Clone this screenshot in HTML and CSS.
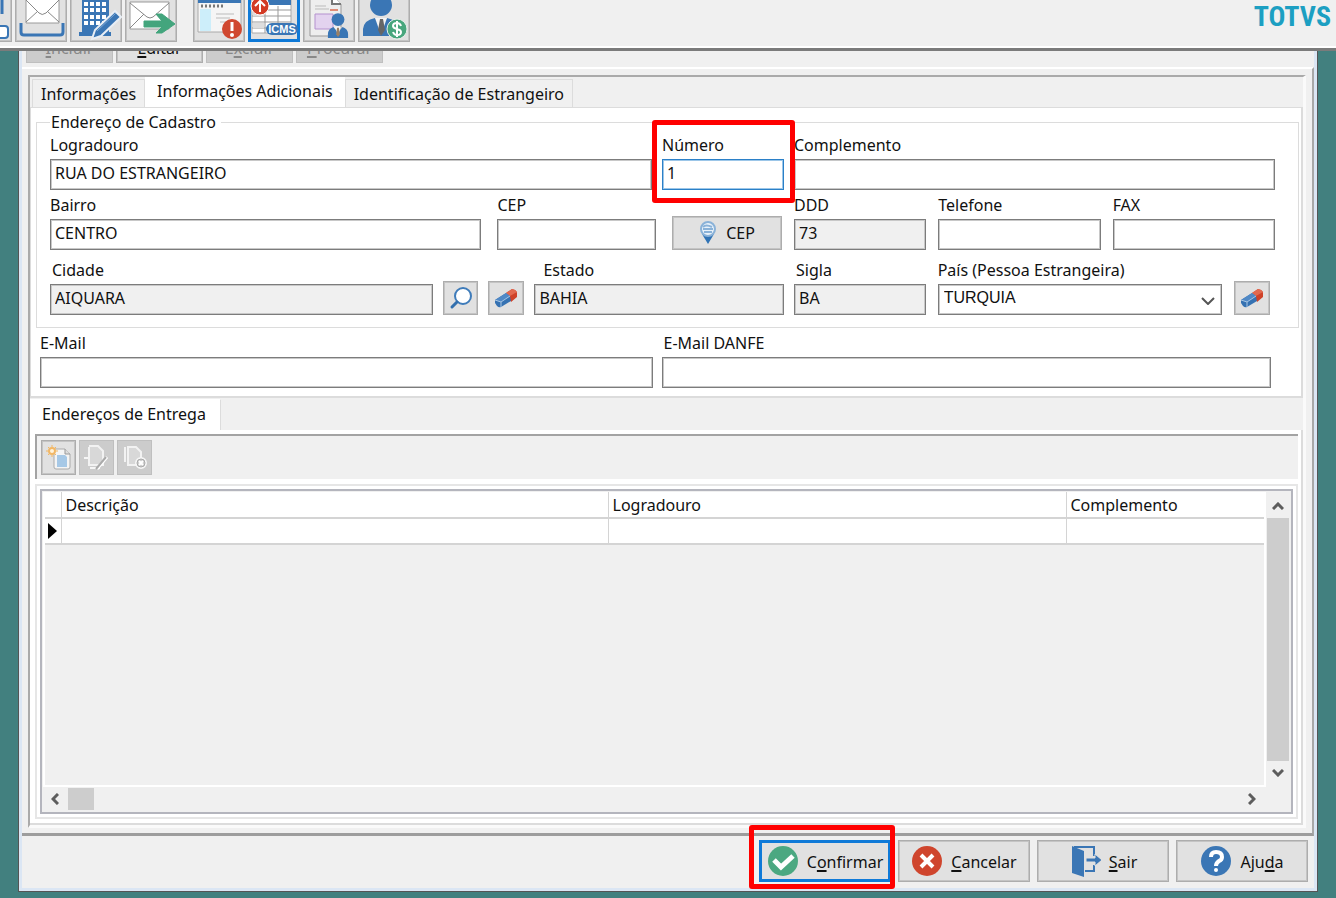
FILE: index.html
```html
<!DOCTYPE html>
<html lang="pt-BR">
<head>
<meta charset="utf-8">
<meta name="viewport" content="width=device-width, initial-scale=1">
<title>TOTVS - Cadastro</title>
<link rel="stylesheet" href="styles.css">
</head>
<body>
<svg class="defs" aria-hidden="true">
  <symbol id="eraser" viewBox="0 0 24 24">
    <path d="M1 14L12 7l5 3v5L7 21q-2 1-4-1l-2-3z" fill="#3672b2"/>
    <path d="M12 7l6-4q5 1 5 4v4l-6 5-1-6z" fill="#cf4229"/>
    <path d="M12 7l6-4q3 0 5 3l-7 4z" fill="#e2694f"/>
    <path d="M1 14l11-7 4 3-9 6z" fill="#5089c6"/>
    <path d="M1 14l6 2 9-6M7 16v5" fill="none" stroke="#a8c6e4"/>
  </symbol>
  <symbol id="person" viewBox="0 0 24 28">
    <circle cx="12" cy="7" r="7" fill="#3a76b5"/>
    <path d="M1 27v-4q0-6 6-8l5 6 5-6q6 2 6 8v4z" fill="#3a76b5"/>
    <path d="M9 15h6l-3 10z" fill="#f4f4f4"/>
    <path d="M11 16h2l1 7-2 3-2-3z" fill="#9a8065"/>
  </symbol>
</svg>

<header class="topbar">
  <nav class="tools" aria-label="Ferramentas">
    <button class="tool tool-first" aria-label="Módulos"><svg viewBox="0 0 52 52"><path d="M36 6h6v18" fill="none" stroke="#3a76b5" stroke-width="3"/><rect x="34" y="36" width="14" height="12" rx="3" fill="#fff" stroke="#3a76b5" stroke-width="2"/></svg></button>
    <button class="tool" aria-label="Caixa de entrada"><svg viewBox="0 0 52 52"><path d="M11 6h33v27H11z" fill="#fff" stroke="#9a9a9a"/><path d="M11 10l13 13q3 3 7 0L44 10M11 32l12-11M44 32L32 21" fill="none" stroke="#888"/><path d="M6 33v9q0 3 3 3h36q3 0 3-3v-9" fill="none" stroke="#3a76b5" stroke-width="3"/></svg></button>
    <button class="tool" aria-label="Editar empresa"><svg viewBox="0 0 52 52"><path d="M12 0h27v42h2v4H9v-4h3z" fill="#3a76b5"/><path d="M14 14h24M14 20h24M14 27h24M14 33h24" stroke="#fff" stroke-width="4" stroke-dasharray="4 2"/><path d="M22 49l3-9 20-19 6 6-20 19z" fill="#3a76b5" stroke="#e8eef5" stroke-width="2"/><path d="M27 41l19-18" stroke="#79a6d4"/></svg></button>
    <button class="tool tool-last" aria-label="Enviar"><svg viewBox="0 0 52 52"><path d="M5 12h39v27H5z" fill="#fff" stroke="#999"/><path d="M5 13l17 14q3 2 6 0l16-14M5 38l14-14M44 38L31 24" fill="none" stroke="#888"/><path d="M19 31h18l-6-7h6l13 10-13 9h-6l6-6H19z" fill="#43a57d" stroke="#43a57d"/></svg></button>
    <button class="tool" aria-label="Avisos"><svg viewBox="0 0 52 52"><path d="M5 4h43v38H5z" fill="#f5f5f5" stroke="#aaa"/><path d="M5 4h43v9H5z" fill="#3a76b5"/><path d="M8 16h24" stroke="#777" stroke-width="3" stroke-dasharray="2 2"/><path d="M7 19h11v22H7z" fill="#cdeefa"/><path d="M23 24h18M23 28h14M27 32h12" stroke="#bbb"/><circle cx="39" cy="39" r="10" fill="#d04830"/><path d="M39 32v9" stroke="#fff" stroke-width="3"/><circle cx="39" cy="45" r="2" fill="#fff"/></svg></button>
    <button class="tool tool-selected" aria-label="ICMS"><svg viewBox="0 0 52 52"><path d="M4 5h39v38H4z" fill="#fff" stroke="#aaa"/><path d="M20 5h23v10H20z" fill="#3a76b5"/><path d="M4 20h39M4 26h39M4 32h39M4 38h39M17 16v27M30 16v27" stroke="#999"/><path d="M5 21h11v5H5zM5 33h11v5H5z" fill="#ddd"/><circle cx="12" cy="16" r="9" fill="#d33b25" stroke="#fff"/><path d="M12 22V11m-5 5l5-5 5 5" fill="none" stroke="#fff" stroke-width="2"/><rect x="18" y="33" width="32" height="12" rx="6" fill="#3a76b5"/><text x="34" y="43" text-anchor="middle" class="icms">ICMS</text></svg></button>
    <button class="tool" aria-label="Documento do cliente"><svg viewBox="0 0 52 52"><path d="M7 5h22l9 9v32H7z" fill="#eee" stroke="#999"/><path d="M29 5v9h9" fill="#fff" stroke="#777" stroke-width="2"/><path d="M12 16h11M12 19h14" stroke="#bbb"/><path d="M27 20h8" stroke="#e08b76" stroke-width="2"/><path d="M12 24h18v15H12z" fill="#e3d3ef" stroke="#b592cf"/><use href="#person" x="24" y="23" width="22" height="26"/></svg></button>
    <button class="tool" aria-label="Financeiro do cliente"><svg viewBox="0 0 52 52"><circle cx="23" cy="15" r="11" fill="#3a76b5"/><path d="M5 46v-7q1-9 12-11l6 6 6-6q11 2 11 11v7z" fill="#3a76b5"/><path d="M17 28h12l-6 17z" fill="#f4f4f4"/><path d="M22 29h3l2 11-4 6-3-6z" fill="#666"/><circle cx="39" cy="39" r="10" fill="#48a67d" stroke="#e6efe9"/><path d="M43 36q-1-3-4-3-4 0-4 3 0 2 4 3t4 3q0 3-4 3-3 0-4-3M39 31v16" fill="none" stroke="#fff" stroke-width="2"/></svg></button>
  </nav>
  <div class="brand">TOTVS</div>
</header>

<main class="window">
  <div class="commands">
    <button class="command" disabled><u>I</u>ncluir</button>
    <button class="command"><u>E</u>ditar</button>
    <button class="command" disabled>E<u>x</u>cluir</button>
    <button class="command" disabled><u>P</u>rocurar</button>
  </div>

  <div class="frame">
    <div class="notebook">
      <div class="tabs" role="tablist">
        <button class="tab" role="tab">Informações</button>
        <button class="tab tab-active" role="tab" aria-selected="true">Informações Adicionais</button>
        <button class="tab" role="tab">Identificação de Estrangeiro</button>
      </div>

      <form class="page" id="form">
        <fieldset class="group">
          <legend>Endereço de Cadastro</legend>
          <div class="row row-street">
            <div class="field"><label for="logradouro">Logradouro</label><input id="logradouro" value="RUA DO ESTRANGEIRO"></div>
            <div class="field marked marked-number"><label for="numero">Número</label><input id="numero" class="is-focused" value="1"></div>
            <div class="field"><label for="complemento">Complemento</label><input id="complemento"></div>
          </div>
          <div class="row row-halves">
            <div class="row row-district">
              <div class="field"><label for="bairro">Bairro</label><input id="bairro" value="CENTRO"></div>
              <div class="field"><label for="cep">CEP</label><input id="cep"></div>
              <button type="button" class="action"><svg class="pin" viewBox="0 0 18 24"><path d="M3 13h12L9 23z" fill="#2f73b5"/><circle cx="9" cy="8" r="7" fill="#e9f2fa" stroke="#8ab2d8" stroke-width="2"/><path d="M4 6q3-3 9 0M4 8h10M5 11h8" fill="none" stroke="#8ab2d8" stroke-width="2"/></svg>CEP</button>
            </div>
            <div class="row row-phones">
              <div class="field"><label for="ddd">DDD</label><input id="ddd" value="73" readonly></div>
              <div class="field"><label for="telefone">Telefone</label><input id="telefone"></div>
              <div class="field"><label for="fax">FAX</label><input id="fax"></div>
            </div>
          </div>
          <div class="row row-halves row-spaced">
            <div class="row row-city">
              <div class="field field-city"><label for="cidade">Cidade</label><input id="cidade" value="AIQUARA" readonly></div>
              <button type="button" class="action" aria-label="Pesquisar cidade"><svg class="glyph" viewBox="0 0 24 24"><circle cx="14" cy="10" r="8" fill="#fff" stroke="#3f7cba" stroke-width="2"/><path d="M8 16l-5 5" stroke="#3370ae" stroke-width="3" stroke-linecap="round"/></svg></button>
              <button type="button" class="action" aria-label="Limpar cidade"><svg class="glyph"><use href="#eraser"/></svg></button>
              <div class="field field-state"><label for="estado">Estado</label><input id="estado" value="BAHIA" readonly></div>
            </div>
            <div class="row row-country">
              <div class="field field-city"><label for="sigla">Sigla</label><input id="sigla" value="BA" readonly></div>
              <div class="field"><label for="pais">País (Pessoa Estrangeira)</label>
                <div class="combo"><select id="pais"><option>TURQUIA</option></select><svg class="chevron" viewBox="0 0 14 8"><path d="M1 1l6 6 6-6" fill="none" stroke="#555" stroke-width="2"/></svg></div>
              </div>
              <button type="button" class="action" aria-label="Limpar país"><svg class="glyph"><use href="#eraser"/></svg></button>
            </div>
          </div>
        </fieldset>
        <div class="row row-mail">
          <div class="field"><label for="email">E-Mail</label><input id="email" type="email"></div>
          <div class="field field-city"><label for="danfe">E-Mail DANFE</label><input id="danfe" type="email"></div>
        </div>
      </form>

      <div class="tabs tabs-delivery" role="tablist">
        <button class="tab tab-active" role="tab" aria-selected="true">Endereços de Entrega</button>
      </div>

      <section class="delivery">
        <div class="minibar">
          <button class="mini" aria-label="Novo endereço"><svg viewBox="0 0 28 28"><path d="M9 5h11l5 5v13q0 2-2 2H11q-2 0-2-2z" fill="#f4f4f4" stroke="#aaa"/><path d="M20 5v5h5" fill="#ddd" stroke="#999"/><path d="M12 11h8l2 2v10H12z" fill="#a6c8e6"/><circle cx="7" cy="7" r="3" fill="#fff3dc" stroke="#f2b765" stroke-width="2"/><path d="M7 1v2M7 11v2M1 7h2M11 7h2M3 3l1 1M10 10l1 1M11 3l-1 1M3 11l1-1" stroke="#f2b765"/></svg></button>
          <button class="mini" disabled aria-label="Editar endereço"><svg viewBox="0 0 28 28"><path d="M6 2h9l5 5v14H6V3" fill="#d8d8d8" stroke="#f2f2f2" stroke-width="2"/><path d="M1 14h4M7 24h10" stroke="#f5f5f5" stroke-width="2"/><path d="M14 25l10-12" stroke="#fff" stroke-width="3"/><path d="M13 25l10-12" stroke="#aaa" stroke-width="2"/></svg></button>
          <button class="mini" disabled aria-label="Excluir endereço"><svg viewBox="0 0 28 28"><path d="M4 3v15M7 3h8l5 5v13H7z" fill="#d8d8d8" stroke="#f2f2f2" stroke-width="2"/><circle cx="20" cy="19" r="5" fill="#ccc" stroke="#f5f5f5" stroke-width="2"/><path d="M18 17l4 4m0-4l-4 4" stroke="#fff" stroke-width="2"/><circle cx="20" cy="19" r="4" fill="none" stroke="#aaa"/></svg></button>
        </div>
        <div class="grid-frame">
          <div class="grid">
            <div class="grid-view">
              <table class="records">
                <colgroup><col class="col-mark"><col class="col-desc"><col class="col-street"><col class="col-extra"></colgroup>
                <thead><tr><td></td><th>Descrição</th><th>Logradouro</th><th>Complemento</th></tr></thead>
                <tbody><tr><td><span class="row-mark"></span></td><td></td><td></td><td></td></tr></tbody>
              </table>
            </div>
            <div class="scroll scroll-v">
              <svg viewBox="0 0 12 8"><path d="M1 7l5-5 5 5" fill="none" stroke="#5d5d5d" stroke-width="3"/></svg>
              <div class="thumb"></div>
              <svg viewBox="0 0 12 8"><path d="M1 1l5 5 5-5" fill="none" stroke="#5d5d5d" stroke-width="3"/></svg>
            </div>
            <div class="scroll scroll-h">
              <svg viewBox="0 0 8 12"><path d="M7 1L2 6l5 5" fill="none" stroke="#5d5d5d" stroke-width="3"/></svg>
              <div class="thumb"></div>
              <svg viewBox="0 0 8 12"><path d="M1 1l5 5-5 5" fill="none" stroke="#5d5d5d" stroke-width="3"/></svg>
            </div>
          </div>
        </div>
      </section>
    </div>
  </div>

  <footer class="actions">
    <div class="marked marked-confirm"><button class="dialog-button is-default" form="form" type="button"><svg viewBox="0 0 32 32"><circle cx="16" cy="16" r="15" fill="#4ba881"/><path d="M7 15l7 7L26 11" fill="none" stroke="#fff" stroke-width="5"/></svg><span>C<u>o</u>nfirmar</span></button></div>
    <button class="dialog-button"><svg viewBox="0 0 32 32"><circle cx="16" cy="16" r="15" fill="#cf452d"/><path d="M10 10l12 12m0-12L10 22" stroke="#fff" stroke-width="4"/></svg><span><u>C</u>ancelar</span></button>
    <button class="dialog-button"><svg viewBox="0 0 32 32"><path d="M3 1l12 5v26L3 28z" fill="#3a76b5"/><path d="M5 2h20v9M25 20v6h-9" fill="none" stroke="#3a76b5" stroke-width="2"/><path d="M17 13h9V9l7 6-7 6v-4h-9z" fill="#3a76b5" stroke="#e1e1e1"/></svg><span><u>S</u>air</span></button>
    <button class="dialog-button"><svg viewBox="0 0 32 32"><circle cx="16" cy="16" r="15" fill="#3a76b5"/><path d="M11 12q0-5 5-5 6 0 6 5 0 3-3 4-3 2-3 5" fill="none" stroke="#fff" stroke-width="4"/><circle cx="16" cy="25" r="2" fill="#fff"/></svg><span>Aju<u>d</u>a</span></button>
  </footer>
</main>
</body>
</html>
```

FILE: styles.css
```css
* { box-sizing: border-box; }

body {
  margin: 0;
  min-height: 100vh;
  display: flex;
  flex-direction: column;
  background: #42807f;
  color: #111;
  font: 16px/22px "Noto Sans", sans-serif;
}

button, input, select { font: inherit; color: inherit; }
button {
  padding: 0;
  border: 1px solid #adadad;
  border-radius: 0;
  background: #e1e1e1;
  box-shadow: inset 0 0 0 1px #c4c4c4;
}
button:disabled { background: #ccc; border-color: #bfbfbf; color: #888; box-shadow: none; }
u { text-underline-offset: 2px; text-decoration-thickness: 2px; }
.defs { display: none; }

/* Top bar */
.topbar {
  display: flex;
  justify-content: space-between;
  height: 51px;
  overflow: hidden;
  background: #f0f0f0;
  border-bottom: 3px solid #7b7b7b;
  box-shadow: inset 0 -2px #fff;
}
.tools { display: flex; align-items: flex-end; gap: 3px; padding-bottom: 6px; }
.tool { width: 52px; height: 52px; flex: none; }
.tool svg { display: block; width: 52px; height: 52px; margin: -1px; }
.tool-first { margin-left: -40px; }
.tool-last { margin-right: 13px; }
.tool-selected { border: 3px solid #0f7ad8; box-shadow: none; }
.tool-selected svg { margin: -3px; }
.icms { font: bold 11px "Liberation Sans", sans-serif; fill: #fff; }
.brand {
  padding-right: 5px;
  color: #1c9fc2;
  font: bold 28px/34px "Liberation Sans Narrow", "Roboto Condensed", "Open Sans Condensed", sans-serif;
}

/* Window */
.window {
  flex: 1;
  display: flex;
  flex-direction: column;
  margin: 0 18px 6px;
  background: #f0f0f0;
  border: 1px solid #555;
  border-top: 0;
  box-shadow: inset 3px 0 #dbe6f4, inset -3px 0 #dbe6f4, inset 0 -3px #dbe6f4;
  padding: 0 3px 3px;
}
.commands { display: flex; align-items: flex-end; gap: 3px; height: 12px; padding-left: 4px; overflow: hidden; }
.command { flex: none; width: 87px; height: 32px; padding-top: 2px; }

.frame {
  flex: 1;
  display: flex;
  margin-top: 4px;
  padding: 6px 6px 5px 6px;
  border-top: 2px solid #fff;
  border-right: 2px solid #a8a8a8;
  border-bottom: 3px solid #9d9d9d;
}
.notebook {
  flex: 1;
  min-width: 0;
  display: flex;
  flex-direction: column;
  border: 2px solid #aaa;
  border-right: 3px solid #fafafa;
  border-bottom: 3px solid #fafafa;
}

.tabs { display: flex; align-items: flex-end; padding-left: 2px; }
.tab { height: 28px; padding: 0 8px; border: 1px solid #dcdcdc; border-bottom: 0; background: #f0f0f0; box-shadow: none; }
.tab-active { height: 30px; padding: 0 11px 4px; border-color: #fff; background: #fff; }
.tabs-delivery { padding: 1px 0 0; border-bottom: 0; }
.tabs-delivery .tab-active { height: 31px; padding-bottom: 2px; padding-right: 14px; border-right-color: #dcdcdc; }

/* Address form */
.page {
  margin: 0;
  padding: 3px 2px 8px 5px;
  border: 1px solid #dcdcdc;
  border-width: 1px 2px 2px 1px;
  background: #fff;
}
.group { min-width: 0; margin: 0; padding: 1px 23px 12px 13px; border: 1px solid #dcdcdc; }
legend { padding: 0 5px 0 1px; }
.row { display: grid; align-items: end; }
.group > .row + .row { margin-top: 4px; }
.group > .row-spaced.row-spaced { margin-top: 9px; }
.row-street { grid-template-columns: 602fr 122fr 481fr; gap: 10px; }
.row-halves { grid-template-columns: 734fr 481fr; gap: 10px; }
.row-district { grid-template-columns: 430fr 158fr 110px; gap: 16px; padding-right: 2px; }
.row-phones { grid-template-columns: 132fr 162fr 162fr; gap: 12px; }
.row-city { grid-template-columns: 384fr 35px 36px 250fr; gap: 10px; }
.row-country { grid-template-columns: 132fr 285fr 36px; gap: 12px; padding-right: 5px; }
.row-mail { grid-template-columns: 612fr 609fr; gap: 9px; margin: 4px 28px 0 4px; }
.field { display: flex; flex-direction: column; gap: 3px; min-width: 0; }
.field-city label { padding-left: 2px; }
.field-state label { padding-left: 9px; }
.field input, .field select {
  width: 100%;
  min-width: 0;
  height: 31px;
  margin: 0;
  padding: 0 4px 3px;
  border: 1px solid #7c7c7c;
  border-radius: 0;
  background: #fff;
  box-shadow: inset 0 0 0 1px #c8c8c8;
  outline: 0;
}
.field input[readonly] { background: #f0f0f0; }
.field .is-focused { border-color: #2b80c8; box-shadow: inset 0 0 0 1px #9cc6e8; }
.combo { position: relative; }
.field select { display: block; appearance: none; font-family: "Liberation Sans", sans-serif; padding-left: 5px; }
.chevron { position: absolute; right: 7px; top: 13px; width: 14px; height: 8px; pointer-events: none; }
.action { display: flex; align-items: center; justify-content: center; gap: 9px; height: 34px; }
.pin { width: 18px; height: 24px; }
.glyph { width: 24px; height: 24px; }

/* Red highlight boxes */
.marked { position: relative; }
.marked::after { content: ""; position: absolute; z-index: 1; border: 5px solid #f00; border-radius: 3px; pointer-events: none; }
.marked-number::after { inset: -14px -11px -13px -10px; }
.marked-confirm::after { inset: -15px -4px -7px -10px; }

/* Delivery addresses */
.delivery {
  flex: 1;
  display: flex;
  flex-direction: column;
  gap: 5px;
  padding: 4px 3px 4px 5px;
  background: #fff;
  border-right: 2px solid #dcdcdc;
  border-bottom: 2px solid #dcdcdc;
}
.minibar { display: flex; gap: 3px; padding: 4px; background: #f0f0f0; border-top: 2px solid #a3a3a3; border-left: 2px solid #a3a3a3; height: 45px; }
.mini { width: 35px; height: 35px; }
.mini svg { display: block; width: 28px; height: 28px; margin: auto; }
.grid-frame { flex: 1; display: flex; padding: 3px; border: 2px solid #e6e6e6; }
.grid { flex: 1; min-width: 0; display: grid; grid-template: 1fr 24px / 1fr 24px; padding: 1px; border: 2px solid #b4b5bd; background: #f0f0f0; }
.grid-view { min-width: 0; border: solid #fff; border-width: 0 2px 2px; }
.records { width: 100%; table-layout: fixed; border-collapse: collapse; background: #fff; }
.records th, .records td { height: 26px; padding: 0 4px; border: solid #d4d4d4; border-width: 0 0 2px 1px; text-align: left; font-weight: normal; }
.records td:first-child { padding: 0 3px; border-left: 0; }
.col-mark { width: 16px; }
.col-street { width: 458px; }
.col-extra { width: 198px; }
.row-mark { display: block; width: 0; border: 8px solid transparent; border-left: 9px solid #000; border-right: 0; }
.scroll { display: flex; align-items: center; }
.scroll svg { flex: none; }
.scroll-v { flex-direction: column; gap: 8px; padding: 10px 0; }
.scroll-v svg { width: 12px; height: 8px; }
.scroll-v .thumb { flex: 1; width: 22px; background: #cdcdcd; }
.scroll-h { gap: 9px; padding: 0 10px 0 8px; }
.scroll-h svg { width: 8px; height: 12px; }
.scroll-h .thumb { width: 26px; height: 22px; background: #cdcdcd; }
.scroll-h svg:last-child { margin-left: auto; }

/* Footer */
.actions { display: flex; justify-content: flex-end; gap: 7px; padding: 4px 6px 6px; }
.dialog-button { display: flex; align-items: center; justify-content: center; gap: 8px; width: 132px; height: 42px; }
.dialog-button svg { width: 32px; height: 32px; }
.dialog-button span { padding-top: 2px; }
.is-default { border: 3px solid #0f7ad8; box-shadow: none; }
```
